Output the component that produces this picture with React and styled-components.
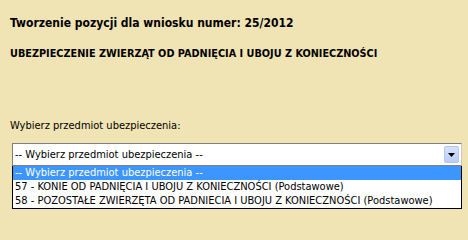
import React from "react";
import styled, { createGlobalStyle } from "styled-components";

const GlobalStyle = createGlobalStyle`
  body {
    margin: 0;
    background: #f0e3b4;
    font-family: "DejaVu Sans Condensed", "DejaVu Sans", sans-serif;
    font-stretch: condensed;
    color: #000;
  }
`;

const Page = styled.div`
  width: 468px;
  height: 219px;
  padding: 15px 0 0 10px;
  box-sizing: border-box;
  display: flex;
  flex-direction: column;
`;

const Title = styled.div`
  font-weight: bold;
  font-size: 12px;
  line-height: 16px;
`;

const Subtitle = styled.div`
  font-weight: bold;
  font-size: 10.8px;
  line-height: 14px;
  margin-top: 16px;
`;

const Label = styled.div`
  font-size: 11px;
  line-height: 14px;
  margin-top: 58px;
`;

const Combo = styled.div`
  position: relative;
  margin: 10px 0 0 2px;
  width: 450px;
`;

const Field = styled.div`
  height: 23px;
  box-sizing: border-box;
  border: 1px solid #7f7f7f;
  border-right-color: #c8c8c8;
  background: #fff;
  display: flex;
  align-items: center;
  justify-content: space-between;
  padding: 0 2px 0 2px;
  font-size: 11px;
`;

const ArrowButton = styled.div`
  width: 15px;
  height: 17px;
  box-sizing: border-box;
  border: 1px solid #b4c6ec;
  border-radius: 2px;
  background: linear-gradient(#d6e3fd, #b9cdf8);
  display: flex;
  align-items: center;
  justify-content: center;
`;

const List = styled.div`
  position: absolute;
  top: 23px;
  left: 0;
  width: 450px;
  box-sizing: border-box;
  border: 1px solid #000;
  border-top: none;
  background: #fff;
`;

const Option = styled.div`
  height: 14px;
  line-height: 14px;
  padding-left: 2px;
  font-size: 11px;
  white-space: nowrap;
  background: ${(p) => (p.$selected ? "#3d95ff" : "#fff")};
  color: ${(p) => (p.$selected ? "#fff" : "#000")};
`;

const options = [
  "-- Wybierz przedmiot ubezpieczenia --",
  "57 - KONIE OD PADNIĘCIA I UBOJU Z KONIECZNOŚCI (Podstawowe)",
  "58 - POZOSTAŁE ZWIERZĘTA OD PADNIECIA I UBOJU Z KONIECZNOŚCI (Podstawowe)",
];

export default function App() {
  return (
    <Page>
      <GlobalStyle />
      <Title>Tworzenie pozycji dla wniosku numer: 25/2012</Title>
      <Subtitle>UBEZPIECZENIE ZWIERZĄT OD PADNIĘCIA I UBOJU Z KONIECZNOŚCI</Subtitle>
      <Label>Wybierz przedmiot ubezpieczenia:</Label>
      <Combo>
        <Field>
          <span>-- Wybierz przedmiot ubezpieczenia --</span>
          <ArrowButton>
            <svg width="7" height="4" viewBox="0 0 7 4">
              <path d="M0 0h7L3.5 4z" fill="#000" />
            </svg>
          </ArrowButton>
        </Field>
        <List>
          {options.map((o, i) => (
            <Option key={o} $selected={i === 0}>
              {o}
            </Option>
          ))}
        </List>
      </Combo>
    </Page>
  );
}
